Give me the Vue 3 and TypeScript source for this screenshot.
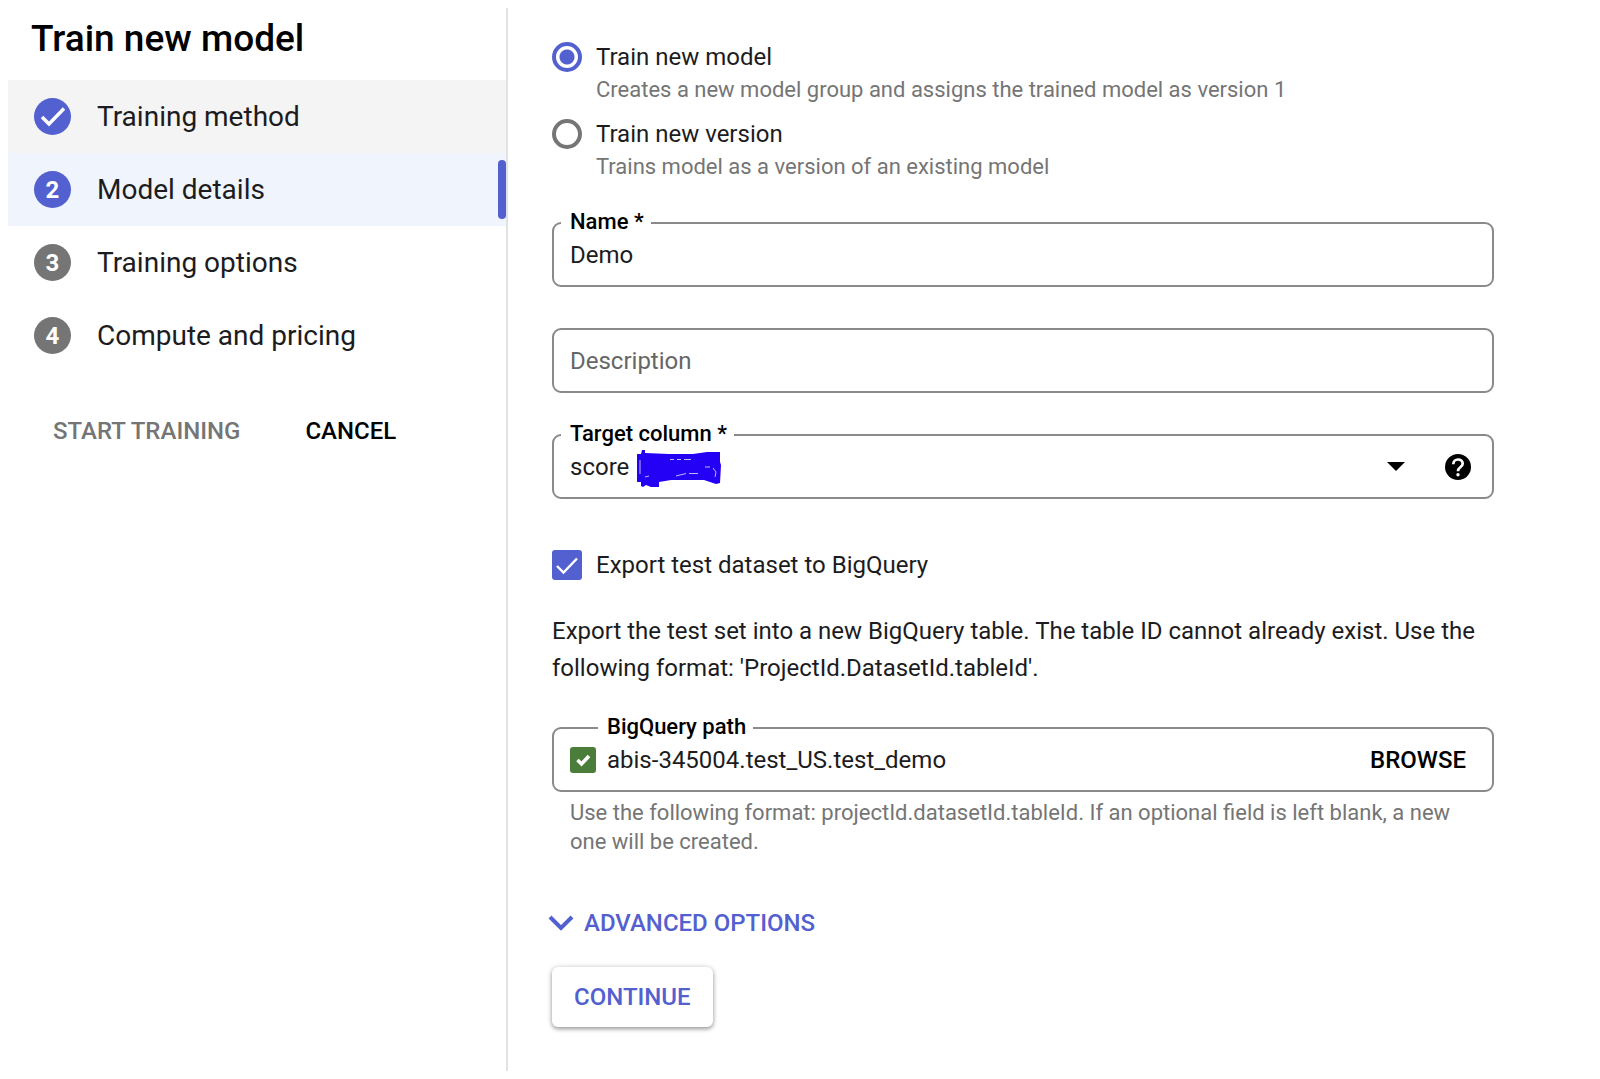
<script setup lang="ts">
import { ref } from 'vue'

interface Step {
  id: number
  label: string
  state: 'done' | 'active' | 'todo'
}

interface Mode {
  value: string
  label: string
  hint: string
}

const steps: Step[] = [
  { id: 1, label: 'Training method', state: 'done' },
  { id: 2, label: 'Model details', state: 'active' },
  { id: 3, label: 'Training options', state: 'todo' },
  { id: 4, label: 'Compute and pricing', state: 'todo' },
]

const modes: Mode[] = [
  {
    value: 'model',
    label: 'Train new model',
    hint: 'Creates a new model group and assigns the trained model as version 1',
  },
  {
    value: 'version',
    label: 'Train new version',
    hint: 'Trains model as a version of an existing model',
  },
]

const mode = ref('model')
const name = ref('Demo')
const description = ref('')
const target = ref('score')
const exportTest = ref(true)
const path = ref('abis-345004.test_US.test_demo')
</script>

<template>
  <div class="page">
    <aside class="sidebar">
      <h1 class="title">Train new model</h1>
      <ol class="steps">
        <li v-for="step in steps" :key="step.id" class="step" :class="step.state">
          <span class="badge">
            <svg v-if="step.state === 'done'" viewBox="0 0 36 36" width="36" height="36" aria-hidden="true">
              <path d="M7 18l7 7L29 9.5" fill="none" stroke="#fff" stroke-width="3.4" />
            </svg>
            <template v-else>{{ step.id }}</template>
          </span>
          <span>{{ step.label }}</span>
        </li>
      </ol>
      <div class="actions">
        <button type="button" class="text-button" disabled>START TRAINING</button>
        <button type="button" class="text-button">CANCEL</button>
      </div>
    </aside>

    <main class="content">
      <div class="modes" role="radiogroup" aria-label="Model type">
        <div v-for="item in modes" :key="item.value" class="mode">
          <input :id="item.value" v-model="mode" class="radio" type="radio" name="mode" :value="item.value" />
          <label :for="item.value">{{ item.label }}</label>
          <p class="hint">{{ item.hint }}</p>
        </div>
      </div>

      <div class="field">
        <label class="float-label" for="name">Name *</label>
        <input id="name" v-model="name" class="control" type="text" />
      </div>

      <div class="field">
        <input v-model="description" class="control" type="text" placeholder="Description" aria-label="Description" />
      </div>

      <div class="field">
        <label class="float-label" for="target">Target column *</label>
        <select id="target" v-model="target" class="control">
          <option value="score">score</option>
        </select>
        <svg class="scribble" viewBox="0 0 84 38" width="84" height="38" aria-hidden="true">
          <path
            d="M0 4L4 4L5 0L8 0L8 3L32 4L56 4L70 2L83 2L83 12L84 15L83 33L79 34L67 30L34 30L22 32L22 37L14 37L9 35L6 37L4 36L4 32L0 32Z"
            fill="#2400f5"
          />
          <path
            d="M3 10V24M8 27L12 26M33 9.5H37M40 9.5H44M47 9.5H54M39 26L49 23.5M52 23.5H61M68 17H73M76 18L79 22L78 27"
            fill="none"
            stroke="#c3b8ff"
            stroke-width="1"
          />
        </svg>
        <svg class="caret" viewBox="0 0 18 9" width="18" height="9" aria-hidden="true">
          <path d="M0 0H18L9 9Z" />
        </svg>
        <button type="button" class="help" aria-label="Help">
          <svg viewBox="0 0 26 26" width="26" height="26" aria-hidden="true">
            <circle cx="13" cy="13" r="13" />
            <path
              d="M8.3 10.2C8.3 3.9 17.7 4.1 17.7 9.8C17.7 13 13 13.2 13 17.2"
              fill="none"
              stroke="#fff"
              stroke-width="2.7"
            />
            <circle cx="13" cy="20.7" r="1.7" fill="#fff" />
          </svg>
        </button>
      </div>

      <label class="check">
        <input v-model="exportTest" type="checkbox" />
        <svg class="tick" viewBox="0 0 30 30" width="30" height="30" aria-hidden="true">
          <path d="M5 16l6.5 6.5L25 8.5" fill="none" stroke="#fff" stroke-width="2.4" />
        </svg>
        <span>Export test dataset to BigQuery</span>
      </label>

      <p class="note">
        Export the test set into a new BigQuery table. The table ID cannot already exist. Use the following format:
        'ProjectId.DatasetId.tableId'.
      </p>

      <div class="field with-icon">
        <label class="float-label" for="path">BigQuery path</label>
        <svg class="valid" viewBox="0 0 26 26" width="26" height="26" aria-hidden="true">
          <rect width="26" height="26" rx="3" fill="#4a7c3a" />
          <path d="M7.5 13l4 4L19 9" fill="none" stroke="#fff" stroke-width="3.6" />
        </svg>
        <input id="path" v-model="path" class="control" type="text" aria-describedby="path-help" />
        <button type="button" class="text-button browse">BROWSE</button>
      </div>
      <p id="path-help" class="helper">
        Use the following format: projectId.datasetId.tableId. If an optional field is left blank, a new one will be
        created.
      </p>

      <button type="button" class="text-button advanced">
        <svg viewBox="0 0 26 16" width="26" height="16" aria-hidden="true">
          <path d="M2 2l11 11L24 2" fill="none" stroke="currentColor" stroke-width="4" />
        </svg>
        ADVANCED OPTIONS
      </button>
      <button type="button" class="text-button continue">CONTINUE</button>
    </main>
  </div>
</template>

<style>
body {
  background: #fff;
}
</style>

<style scoped>
.page {
  --accent: #5360cf;
  --grey: #757575;
  --line: #8a8a8a;
  display: flex;
  min-height: 100vh;
  box-sizing: border-box;
  padding: 8px;
  color: #1c1c1e;
  font-family: Roboto, 'Liberation Sans', sans-serif;
  font-size: 24px;
  line-height: 32px;
}

h1,
p,
ol {
  margin: 0;
  padding: 0;
}

button,
input,
select {
  font: inherit;
  color: inherit;
  margin: 0;
  padding: 0;
  border: 0;
  background: none;
}

.sidebar {
  flex: none;
  width: 498px;
  border-right: 2px solid #e2e2e2;
}

.title {
  padding: 11px 23px 21px;
  font-size: 37px;
  font-weight: 500;
  line-height: 40px;
  color: #000;
}

.steps {
  list-style: none;
}

.step {
  position: relative;
  display: flex;
  align-items: center;
  gap: 26px;
  height: 73px;
  padding-left: 26px;
  font-size: 28px;
}

.badge {
  display: flex;
  align-items: center;
  justify-content: center;
  width: 37px;
  height: 37px;
  border-radius: 50%;
  background: var(--grey);
  color: #fff;
  font-size: 24px;
  font-weight: 700;
}

.done {
  background: #f4f4f4;
}

.active {
  background: #f0f4fd;
}

.done .badge,
.active .badge {
  background: var(--accent);
}

.active::after {
  content: '';
  position: absolute;
  top: 7px;
  right: 0;
  bottom: 7px;
  width: 8px;
  border-radius: 4px;
  background: var(--accent);
}

.actions {
  display: flex;
  gap: 65px;
  padding: 43px 0 0 45px;
}

.text-button {
  font-weight: 500;
  color: #000;
  white-space: nowrap;
  cursor: pointer;
}

.text-button:disabled {
  color: var(--grey);
  cursor: default;
}

.content {
  flex: 1;
  display: flex;
  flex-direction: column;
  align-items: stretch;
  padding: 33px 98px 40px 44px;
}

.modes {
  display: flex;
  flex-direction: column;
  gap: 11px;
  margin-bottom: 38px;
}

.mode {
  display: grid;
  grid-template-columns: 30px 1fr;
  column-gap: 14px;
  align-items: center;
}

.radio {
  appearance: none;
  width: 30px;
  height: 30px;
  border: 4px solid var(--grey);
  border-radius: 50%;
}

.radio:checked {
  border-color: var(--accent);
  background: radial-gradient(circle, var(--accent) 7px, transparent 8px);
}

.hint {
  grid-column: 2;
  font-size: 22px;
  line-height: 34px;
  color: var(--grey);
}

.field {
  position: relative;
  display: flex;
  align-items: center;
  height: 65px;
  box-sizing: border-box;
  margin-bottom: 41px;
  padding: 0 21px 0 16px;
  border: 2px solid var(--line);
  border-radius: 9px;
}

.float-label {
  position: absolute;
  top: -18px;
  left: 7px;
  padding: 0 7px 0 9px;
  background: #fff;
  font-size: 22px;
  font-weight: 500;
  color: #000;
}

.with-icon .float-label {
  left: 44px;
}

.control {
  flex: 1;
  min-width: 0;
  height: 61px;
  outline: 0;
  appearance: none;
}

.control::placeholder {
  color: #666;
  opacity: 1;
}

.scribble {
  position: absolute;
  top: 14px;
  left: 83px;
}

.caret {
  margin-right: 40px;
}

.help {
  display: flex;
}

.check {
  position: relative;
  display: flex;
  align-items: center;
  gap: 14px;
  margin: 9px 0 32px;
}

.check input {
  appearance: none;
  width: 30px;
  height: 30px;
  border: 3px solid var(--grey);
  border-radius: 3px;
}

.check input:checked {
  border: 0;
  background: var(--accent);
}

.tick {
  position: absolute;
  left: 0;
}

.note {
  margin-bottom: 40px;
  line-height: 37px;
}

.with-icon {
  gap: 11px;
  margin-bottom: 6px;
  padding-right: 26px;
}

.helper {
  padding: 0 18px;
  font-size: 22px;
  line-height: 29px;
  color: var(--grey);
}

.advanced,
.continue {
  align-self: flex-start;
  color: var(--accent);
}

.advanced {
  display: flex;
  align-items: center;
  gap: 10px;
  margin: 51px 0 28px -4px;
}

.continue {
  height: 60px;
  padding: 0 22px;
  border-radius: 6px;
  background: #fff;
  box-shadow: 0 2px 4px rgba(0, 0, 0, 0.36), 0 0 6px rgba(0, 0, 0, 0.12);
}
</style>
